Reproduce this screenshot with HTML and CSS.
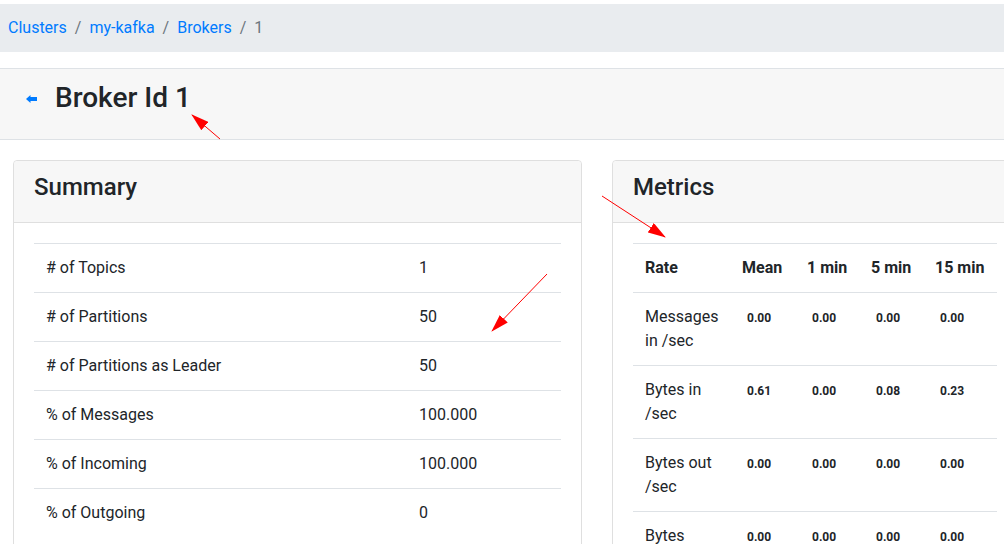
FILE: index.html
```html
<!DOCTYPE html>
<html lang="en">
<head>
<meta charset="utf-8">
<title>Broker Id 1</title>
<link rel="stylesheet" href="styles.css">
</head>
<body>
<nav class="breadcrumb">
  <a href="#">Clusters</a><span class="sep">/</span>
  <a href="#">my-kafka</a><span class="sep">/</span>
  <a href="#">Brokers</a><span class="sep">/</span>
  <span class="current">1</span>
</nav>

<header class="page-head">
  <a class="back" href="#" aria-label="Back">
    <svg width="12" height="8" viewBox="0 0 12 8"><path d="M0 4 L4.5 0 L4.5 2 L11 2 L11 6 L4.5 6 L4.5 8 Z" fill="#007bff"/></svg>
  </a>
  <h1 class="title">Broker Id 1</h1>
</header>

<main class="cards">
  <section class="card">
    <div class="card-header"><h2>Summary</h2></div>
    <div class="card-body">
      <table class="summary">
        <tr><td class="label">#&nbsp;of Topics</td><td>1</td></tr>
        <tr><td class="label">#&nbsp;of Partitions</td><td>50</td></tr>
        <tr><td class="label">#&nbsp;of Partitions as Leader</td><td>50</td></tr>
        <tr><td class="label">%&nbsp;of Messages</td><td>100.000</td></tr>
        <tr><td class="label">%&nbsp;of Incoming</td><td>100.000</td></tr>
        <tr><td class="label">%&nbsp;of Outgoing</td><td>0</td></tr>
      </table>
    </div>
  </section>

  <section class="card">
    <div class="card-header"><h2>Metrics</h2></div>
    <div class="card-body">
      <table class="metrics">
        <colgroup><col class="c-rate"><col class="c-mean"><col class="c-min"><col class="c-min"><col class="c-15"></colgroup>
        <thead>
          <tr><th>Rate</th><th>Mean</th><th>1 min</th><th>5 min</th><th>15 min</th></tr>
        </thead>
        <tbody>
          <tr><td>Messages in /sec</td><td class="v">0.00</td><td class="v">0.00</td><td class="v">0.00</td><td class="v">0.00</td></tr>
          <tr><td>Bytes in /sec</td><td class="v">0.61</td><td class="v">0.00</td><td class="v">0.08</td><td class="v">0.23</td></tr>
          <tr><td>Bytes out /sec</td><td class="v">0.00</td><td class="v">0.00</td><td class="v">0.00</td><td class="v">0.00</td></tr>
          <tr><td>Bytes rejected /sec</td><td class="v">0.00</td><td class="v">0.00</td><td class="v">0.00</td><td class="v">0.00</td></tr>
        </tbody>
      </table>
    </div>
  </section>
</main>

<svg class="annotations" width="1004" height="544" viewBox="0 0 1004 544" aria-hidden="true">
  <defs>
    <marker id="ah" viewBox="0 0 18 11" refX="17" refY="5.5" markerWidth="18" markerHeight="11" orient="auto" markerUnits="userSpaceOnUse">
      <path d="M0 0 L18 5.5 L0 11 Z" fill="#ff0000"/>
    </marker>
  </defs>
  <line x1="220" y1="139" x2="192" y2="115" stroke="#ff0000" stroke-width="1" marker-end="url(#ah)"/>
  <line x1="602" y1="196" x2="665" y2="237" stroke="#ff0000" stroke-width="1" marker-end="url(#ah)"/>
  <line x1="547" y1="274" x2="492" y2="331" stroke="#ff0000" stroke-width="1" marker-end="url(#ah)"/>
</svg>
</body>
</html>
```

FILE: styles.css
```css
html, body {
  margin: 0;
  padding: 0;
  overflow: hidden;
  background: #fff;
}
body {
  position: relative;
  font-family: Roboto, "Liberation Sans", sans-serif;
  font-size: 16px;
  line-height: 24px;
  color: #212529;
  width: 1004px;
  height: 544px;
}
a { color: #007bff; text-decoration: none; }

.breadcrumb {
  margin: 4px 0 16px;
  padding: 12px 8px;
  background: #e9ecef;
  display: flex;
  align-items: center;
}
.breadcrumb .sep {
  color: #6c757d;
  padding: 0 8px;
}
.breadcrumb .current { color: #6c757d; }

.page-head {
  display: flex;
  align-items: center;
  background: #f7f7f7;
  border-top: 1px solid #dee2e6;
  border-bottom: 1px solid #dee2e6;
  padding: 12px 0 24px 26px;
}
.back {
  display: flex;
  width: 29px;
  margin-top: 2px;
}
.title {
  margin: 0;
  font-size: 28px;
  line-height: 34px;
  font-weight: 500;
}

.cards {
  display: grid;
  grid-template-columns: 569px 569px;
  gap: 30px;
  padding: 20px 0 0 13px;
}
.card {
  border: 1px solid #dfdfdf;
  border-radius: 4px;
  background: #fff;
  min-height: 420px;
}
.card-header {
  background: #f7f7f7;
  border-bottom: 1px solid #dfdfdf;
  padding: 12px 20px 20px;
  border-radius: 4px 4px 0 0;
}
.card-header h2 {
  margin: 0;
  font-size: 24px;
  line-height: 29px;
  font-weight: 500;
}
.card-body { padding: 20px; }

table {
  border-collapse: collapse;
}
td, th {
  border-top: 1px solid #dee2e6;
  padding: 12px;
  text-align: left;
}
.summary { width: 100%; }
.summary .label { width: 349px; }

.metrics {
  table-layout: fixed;
  width: 364px;
}
.metrics td, .metrics th { vertical-align: baseline; }
.metrics th { font-weight: 700; white-space: nowrap; }
.c-rate { width: 97px; }
.c-mean { width: 65px; }
.c-min { width: 64px; }
.c-15 { width: 74px; }
.metrics .v {
  font-size: 12px;
  font-weight: 700;
  padding-left: 17px;
}

.annotations {
  position: absolute;
  left: 0;
  top: 0;
  pointer-events: none;
}
```
